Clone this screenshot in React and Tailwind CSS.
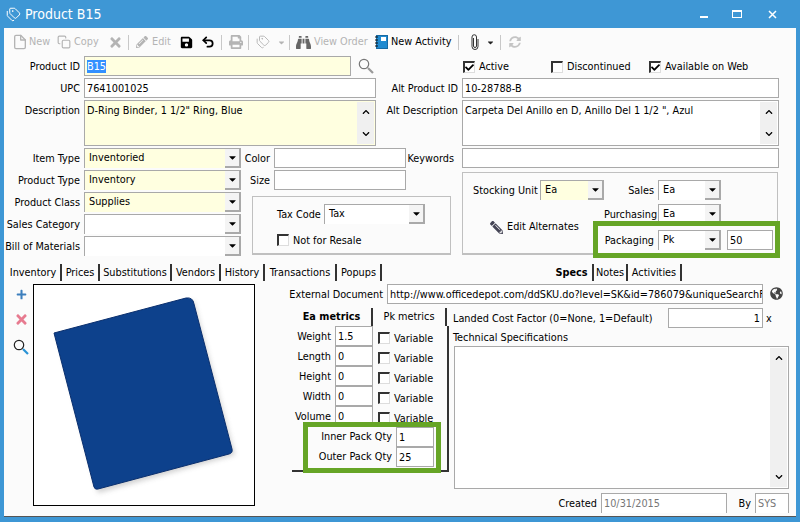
import {
  FaBinoculars,
  FaCaretDown,
  FaCheck,
  FaChevronDown,
  FaChevronUp,
  FaPencilAlt,
  FaPlus,
  FaPrint,
  FaSave,
  FaSyncAlt,
  FaTimes,
  FaGlobeAmericas,
} from "react-icons/fa";
import { FiFile, FiCopy } from "react-icons/fi";
import { Tags, Undo2 } from "lucide-react";

const Label = ({ w, tight, children }) => (
  <div style={{ width: w }} className={`shrink-0 h-[20px] text-right pr-[4px] whitespace-nowrap ${tight ? "leading-[20px]" : "leading-[22px]"}`}>
    {children}
  </div>
);

const Input = ({ w, value, yellow, className = "" }) => (
  <div
    style={{ width: w }}
    className={`shrink-0 h-[20px] border border-[#a9a9a9] px-[2px] leading-[20px] whitespace-nowrap overflow-hidden ${yellow ? "bg-[#ffffe0]" : "bg-white"} ${className}`}
  >
    {value}
  </div>
);

const Select = ({ w, value, yellow }) => (
  <div
    style={{ width: w }}
    className={`shrink-0 h-[20px] flex border-t border-l border-[#a9a9a9] ${yellow ? "bg-[#ffffe0]" : "bg-white"}`}
  >
    <div className="flex-1 pl-[4px] leading-[17px] overflow-hidden">{value}</div>
    <div className="w-[16px] bg-[#f4f4f4] border-r-2 border-b-2 border-[#a9a9a9] flex items-center justify-center text-black">
      <FaCaretDown className="text-[11px]" />
    </div>
  </div>
);

const Check = ({ checked, label, w, className = "" }) => (
  <div style={{ width: w }} className={`flex items-center shrink-0 ${className}`}>
    <div className="w-[12px] h-[12px] border-t-2 border-l-2 border-[#333] border-r border-b border-r-[#ddd] border-b-[#ddd] bg-white flex items-center justify-center">
      {checked && <FaCheck className="text-[9px] text-black" />}
    </div>
    <span className="ml-[4px] mt-[2px] whitespace-nowrap">{label}</span>
  </div>
);

const Scroll = () => (
  <div className="absolute right-[1px] top-[1px] bottom-[1px] w-[17px] bg-[#f0f0f0] flex flex-col justify-between items-center py-[6px] text-black">
    <FaChevronUp className="text-[8px]" />
    <FaChevronDown className="text-[8px]" />
  </div>
);

const Sep = ({ l, r }) => <div style={{ marginLeft: l, marginRight: r }} className="w-px h-[15px] bg-[#c8c8c8] shrink-0" />;

const Tab = ({ w, bold, children }) => (
  <div style={{ width: w }} className={`shrink-0 h-[17px] border-r-[2px] border-[#333] leading-[17px] text-center whitespace-nowrap ${bold ? "font-bold" : ""}`}>
    {children}
  </div>
);

const Metric = ({ label, value }) => (
  <div className="flex h-[20px]">
    <Label w={43}>{label}</Label>
    <Input w={38} value={value} />
    <Check label="Variable" className="ml-[5px] mt-[4px]" />
  </div>
);

const Magnifier = ({ handle, ring, className = "" }) => (
  <svg width="16" height="16" viewBox="0 0 16 16" className={className}>
    <circle cx="6" cy="6" r="4.7" fill="none" stroke={ring} strokeWidth="1.2" />
    <path d="M10 10l5 5" stroke={handle} strokeWidth="2.2" />
  </svg>
);

export default function App() {
  return (
    <div className="w-[800px] h-[522px] overflow-hidden bg-[#3e97d5] flex flex-col text-black text-[10.8px] font-['DejaVu_Sans_Condensed','DejaVu_Sans',sans-serif]">
      {/* title bar */}
      <div className="h-[28px] shrink-0 flex items-center pl-[6px] text-white">
        <Tags size={15} strokeWidth={1.6} />
        <span className="ml-[4px] text-[14px]">Product B15</span>
        <div className="ml-auto flex items-start h-[8px]">
          <div className="w-[8px] h-[2px] bg-white mt-[6px] mr-[24px]" />
          <div className="w-[10px] h-[8px] border border-t-2 border-white mr-[26px]" />
          <svg width="9" height="9" viewBox="0 0 9 9" className="mr-[23px]">
            <path d="M1 1l7 7M8 1l-7 7" stroke="white" strokeWidth="1.5" />
          </svg>
        </div>
      </div>

      <div className="mx-[4px] h-[489px] shrink-0 bg-[#fbfbfb] border-b border-[#555]">
        {/* toolbar */}
        <div className="h-[28px] flex items-center pl-[8px] text-[#b4b4b4]">
          <FiFile className="text-[16px]" />
          <span className="ml-[1px] w-[19px]">New</span>
          <FiCopy className="text-[14px] ml-[9px]" />
          <span className="ml-[3px] w-[25px]">Copy</span>
          <FaTimes className="text-[15px] ml-[9px]" />
          <Sep l={5} r={7} />
          <FaPencilAlt className="text-[12px]" />
          <span className="ml-[4px] w-[20px]">Edit</span>
          <FaSave className="text-[13px] ml-[8px] text-black" />
          <Undo2 size={14} strokeWidth={3} className="ml-[8px] text-black" />
          <Sep l={6} r={7} />
          <FaPrint className="text-[14px]" />
          <Sep l={5} r={7} />
          <Tags size={14} strokeWidth={1.6} />
          <FaCaretDown className="text-[9px] ml-[7px]" />
          <Sep l={3} r={6} />
          <FaBinoculars className="text-[15px] text-[#666]" />
          <span className="ml-[3px] w-[52px] whitespace-nowrap">View Order</span>
          <svg width="13" height="14" viewBox="0 0 13 14" className="ml-[9px]">
            <rect x="1.5" y="0.5" width="11" height="13" fill="#1f8ad0" stroke="#176aa3" />
            <rect x="6" y="2" width="5" height="4" fill="white" />
            <path d="M0 2h3M0 5h3M0 8h3M0 11h3" stroke="#111" />
          </svg>
          <span className="ml-[3px] w-[61px] whitespace-nowrap text-black">New Activity</span>
          <Sep l={6} r={12} />
          <svg width="8" height="16" viewBox="0 0 8 16">
            <path d="M2.5 4v8a1.5 1.5 0 0 0 3 0V3a2.2 2.2 0 0 0-4.5 0v9.5a3 3 0 0 0 6 0V5" fill="none" stroke="#333" strokeWidth="1" />
          </svg>
          <FaCaretDown className="text-[9px] ml-[7px] text-[#222]" />
          <Sep l={5} r={8} />
          <FaSyncAlt className="text-[12px] text-[#c4c4c4]" />
        </div>

        {/* id rows */}
        <div className="flex h-[20px]">
          <Label w={80}>Product ID</Label>
          <Input
            w={267}
            yellow
            value={<span className="bg-[#3390ff] text-white">B15</span>}
          />
          <div className="w-[112px] shrink-0 pl-[7px] pt-[2px]">
            <Magnifier ring="#777" handle="#999" />
          </div>
          <Check checked label="Active" w={88} className="mt-[1px]" />
          <Check label="Discontinued" w={98} className="mt-[1px]" />
          <Check checked label="Available on Web" className="mt-[1px]" />
        </div>
        <div className="flex h-[20px] mt-[2px]">
          <Label w={80}>UPC</Label>
          <Input w={292} value="7641001025" />
          <Label w={86}>Alt Product ID</Label>
          <Input w={317} value="10-28788-B" />
        </div>
        <div className="flex h-[46px] mt-[2px]">
          <Label w={80}>Description</Label>
          <div className="relative w-[292px] border border-[#a9a9a9] bg-[#ffffe0] px-[2px] leading-[20px]">
            D-Ring Binder, 1 1/2" Ring, Blue
            <Scroll />
          </div>
          <Label w={86}>Alt Description</Label>
          <div className="relative w-[317px] border border-[#a9a9a9] bg-white px-[2px] leading-[20px]">
            Carpeta Del Anillo en D, Anillo Del 1 1/2 ", Azul
            <Scroll />
          </div>
        </div>

        {/* classification rows */}
        <div className="flex mt-[2px] h-[110px]">
          <div className="w-[237px] shrink-0 flex flex-col gap-[2px]">
            <div className="flex">
              <Label w={80}>Item Type</Label>
              <Select w={157} value="Inventoried" yellow />
            </div>
            <div className="flex">
              <Label w={80}>Product Type</Label>
              <Select w={157} value="Inventory" yellow />
            </div>
            <div className="flex">
              <Label w={80}>Product Class</Label>
              <Select w={157} value="Supplies" yellow />
            </div>
            <div className="flex">
              <Label w={80}>Sales Category</Label>
              <Select w={157} />
            </div>
            <div className="flex">
              <Label w={80}>Bill of Materials</Label>
              <Select w={157} />
            </div>
          </div>

          <div className="w-[221px] shrink-0">
            <div className="flex">
              <Label w={33}>Color</Label>
              <Input w={132} />
              <Label w={52}>Keywords</Label>
            </div>
            <div className="flex mt-[2px]">
              <Label w={33}>Size</Label>
              <Input w={132} />
            </div>
            <div className="ml-[11px] mt-[6px] w-[199px] h-[59px] border border-b-2 border-[#c0c0c0] pl-[24px] pt-[7px]">
              <div className="flex h-[20px]">
                <div className="w-[47px] leading-[22px] whitespace-nowrap">Tax Code</div>
                <Select w={101} value="Tax" />
              </div>
              <Check label="Not for Resale" className="mt-[7px]" />
            </div>
          </div>

          <div className="w-[317px] shrink-0">
            <Input w={317} />
            <div className="relative mt-[4px] w-[316px] h-[83px] border border-[#c0c0c0] border-b-2 pt-[7px]">
              <div className="flex h-[20px]">
                <div className="w-[77px] pl-[10px] leading-[22px] whitespace-nowrap">Stocking Unit</div>
                <Select w={64} value="Ea" yellow />
                <Label w={54}>Sales</Label>
                <Select w={63} value="Ea" />
              </div>
              <div className="flex mt-[4px] h-[20px]">
                <div className="w-[141px] flex items-center pl-[27px] h-[30px] mt-[8px] whitespace-nowrap">
                  <FaPencilAlt className="text-[13px] text-[#445] mr-[4px] -scale-x-100" />
                  Edit Alternates
                </div>
                <Label w={54}>Purchasing</Label>
                <Select w={63} value="Ea" />
              </div>

              {/* highlight */}
              <div className="absolute left-[130px] top-[48px] w-[187px] h-[37px] border-[5px] border-[#66a526] bg-[#fbfbfb] flex items-center">
                <Label w={60}>Packaging</Label>
                <Select w={63} value="Pk" />
                <Input w={46} value="50" className="ml-[6px]" />
              </div>
            </div>
          </div>
        </div>

        {/* tabs row */}
        <div className="flex mt-[6px] h-[17px]">
          <div className="ml-[2px] flex">
            <Tab w={56}>Inventory</Tab>
            <Tab w={38}>Prices</Tab>
            <Tab w={72}>Substitutions</Tab>
            <Tab w={49}>Vendors</Tab>
            <Tab w={44}>History</Tab>
            <Tab w={72}>Transactions</Tab>
            <Tab w={45}>Popups</Tab>
          </div>
          <div className="ml-[169px] flex">
            <Tab w={43} bold>Specs</Tab>
            <Tab w={34}>Notes</Tab>
            <Tab w={54}>Activities</Tab>
          </div>
        </div>

        <div className="flex mt-[3px]">
          {/* side icons */}
          <div className="w-[29px] shrink-0 flex flex-col items-center pl-[5px] gap-[12px] pt-[5px]">
            <FaPlus className="text-[11px] text-[#3d7fbd]" />
            <FaTimes className="text-[15px] text-[#e77b90]" />
            <Magnifier ring="#222" handle="#2a93d5" />
          </div>

          {/* picture */}
          <div className="w-[222px] h-[222px] shrink-0 border border-black bg-white">
            <svg width="220" height="220" viewBox="0 0 220 220">
              <defs>
                <filter id="soft" x="-20%" y="-20%" width="140%" height="140%">
                  <feGaussianBlur stdDeviation="2.5" />
                </filter>
              </defs>
              <path d="M24 52 L160 16 L201 170 L64 208 Z" fill="#999" opacity="0.45" filter="url(#soft)" />
              <path
                d="M20 48 L152 13 Q159 12 160 19 L198 164 Q199 168 195 169 L64 204 Q61 205 60 202 Z"
                fill="#0d418c"
                stroke="#0a2f6e"
              />
            </svg>
          </div>

          {/* right panel */}
          <div className="ml-[4px] flex-1 min-w-0">
            <div className="flex h-[20px]">
              <Label w={128}>External Document</Label>
              <Input w={376} value="http://www.officedepot.com/ddSKU.do?level=SK&id=786079&uniqueSearchF" />
              <FaGlobeAmericas className="ml-[7px] mt-[3px] text-[13px] text-[#444]" />
            </div>

            <div className="flex mt-[4px]">
              <div className="relative w-[157px] ml-[33px] shrink-0">
                <div className="flex h-[18px]">
                  <div className="w-[81px] border-r-2 border-[#333] text-center font-bold leading-[18px] whitespace-nowrap">Ea metrics</div>
                  <div className="w-[74px] border-r-2 border-[#333] text-center leading-[18px] whitespace-nowrap">Pk metrics</div>
                </div>
                <div className="h-[146px] border-r-2 border-b-2 border-[#333]">
                  <Metric label="Weight" value="1.5" />
                  <Metric label="Length" value="0" />
                  <Metric label="Height" value="0" />
                  <Metric label="Width" value="0" />
                  <Metric label="Volume" value="0" />
                </div>

                {/* highlight */}
                <div className="absolute left-[11px] top-[114px] w-[138px] h-[51px] border-[5px] border-[#66a526] bg-[#fbfbfb] flex flex-col">
                  <div className="flex h-[20px]">
                    <Label w={88} tight>Inner Pack Qty</Label>
                    <Input w={38} value="1" />
                  </div>
                  <div className="flex h-[20px]">
                    <Label w={88} tight>Outer Pack Qty</Label>
                    <Input w={38} value="25" />
                  </div>
                </div>
              </div>

              <div className="ml-[4px] flex-1 min-w-0">
                <div className="flex h-[20px] leading-[22px] whitespace-nowrap">
                  <div className="w-[215px]">Landed Cost Factor (0=None, 1=Default)</div>
                  <Input w={95} value="1" className="text-right" />
                  <span className="ml-[3px]">x</span>
                </div>
                <div className="h-[18px] leading-[20px]">Technical Specifications</div>
                <div className="relative ml-px w-[335px] h-[143px] border border-[#a9a9a9] bg-white">
                  <Scroll />
                </div>
                <div className="flex h-[20px] mt-[4px]">
                  <Label w={148}>Created</Label>
                  <Input w={126} value="10/31/2015" className="text-[#777] border-b-0" />
                  <Label w={28}>By</Label>
                  <Input w={34} value="SYS" className="text-[#777] border-b-0" />
                </div>
              </div>
            </div>
          </div>
        </div>
      </div>
    </div>
  );
}
